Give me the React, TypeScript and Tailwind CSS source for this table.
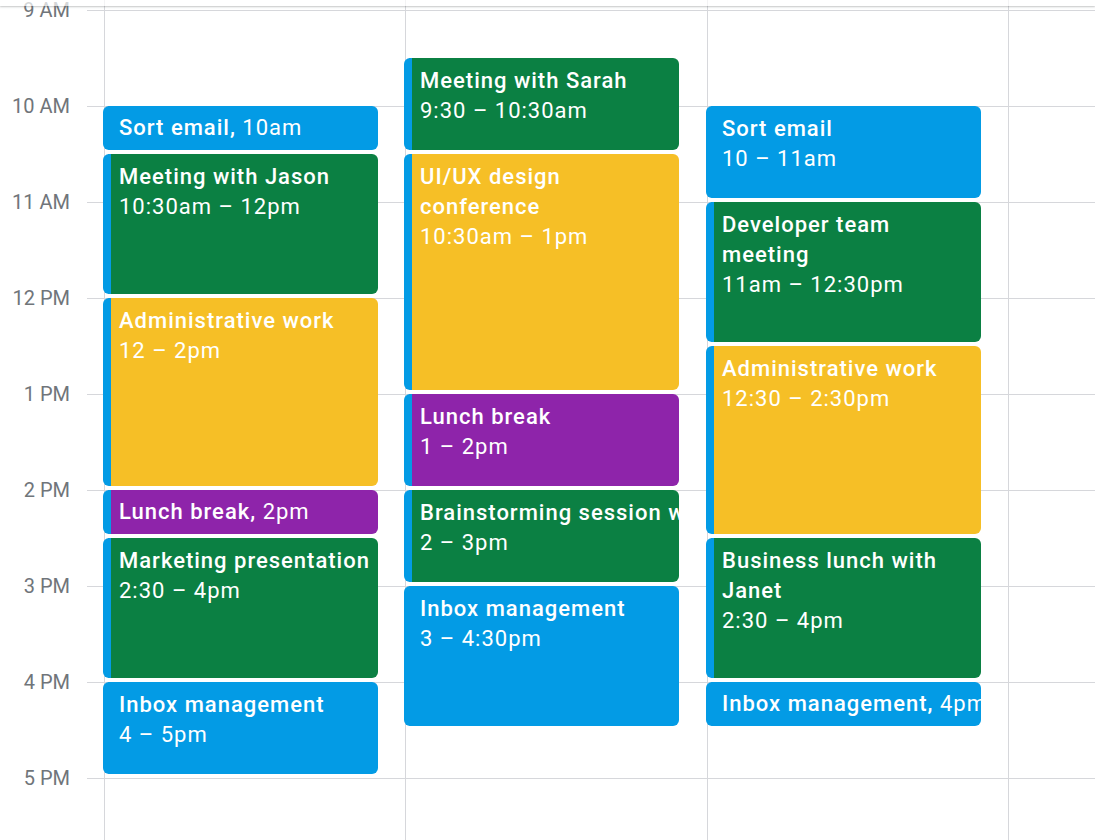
import React from "react";

type Ev = {
  title: string;
  time: string;
  start: number;
  end: number;
  color: string;
  inline?: boolean;
  clip?: boolean;
};

const HOUR = 96;
const FIRST = 9;
const hours = ["9 AM", "10 AM", "11 AM", "12 PM", "1 PM", "2 PM", "3 PM", "4 PM", "5 PM"];

const colors: Record<string, string> = {
  blue: "bg-[#039be5]",
  green: "bg-[#0b8043]",
  yellow: "bg-[#f6bf26]",
  purple: "bg-[#8e24aa]",
};

const columns: Ev[][] = [
  [
    { title: "Sort email", time: "10am", start: 10, end: 10.5, color: "blue", inline: true },
    { title: "Meeting with Jason", time: "10:30am – 12pm", start: 10.5, end: 12, color: "green" },
    { title: "Administrative work", time: "12 – 2pm", start: 12, end: 14, color: "yellow" },
    { title: "Lunch break", time: "2pm", start: 14, end: 14.5, color: "purple", inline: true },
    { title: "Marketing presentation", time: "2:30 – 4pm", start: 14.5, end: 16, color: "green", clip: true },
    { title: "Inbox management", time: "4 – 5pm", start: 16, end: 17, color: "blue" },
  ],
  [
    { title: "Meeting with Sarah", time: "9:30 – 10:30am", start: 9.5, end: 10.5, color: "green" },
    { title: "UI/UX design conference", time: "10:30am – 1pm", start: 10.5, end: 13, color: "yellow" },
    { title: "Lunch break", time: "1 – 2pm", start: 13, end: 14, color: "purple" },
    { title: "Brainstorming session with team", time: "2 – 3pm", start: 14, end: 15, color: "green", clip: true },
    { title: "Inbox management", time: "3 – 4:30pm", start: 15, end: 16.5, color: "blue" },
  ],
  [
    { title: "Sort email", time: "10 – 11am", start: 10, end: 11, color: "blue" },
    { title: "Developer team meeting", time: "11am – 12:30pm", start: 11, end: 12.5, color: "green" },
    { title: "Administrative work", time: "12:30 – 2:30pm", start: 12.5, end: 14.5, color: "yellow" },
    { title: "Business lunch with Janet", time: "2:30 – 4pm", start: 14.5, end: 16, color: "green" },
    { title: "Inbox management", time: "4pm", start: 16, end: 16.5, color: "blue", inline: true },
  ],
  [],
];

function EventCard({ ev }: { ev: Ev }) {
  const top = (ev.start - FIRST) * HOUR;
  const height = (ev.end - ev.start) * HOUR - 4;
  return (
    <div
      className={`absolute left-[-2px] w-[275px] overflow-hidden rounded-[6px] border-l-8 border-[#039be5] pl-[8px] pt-[8px] text-[22px] leading-[30px] tracking-[1px] text-white ${colors[ev.color]}`}
      style={{ top, height }}
    >
      {ev.inline ? (
        <div className="-mt-px whitespace-nowrap">
          <span className="font-medium">{ev.title},</span> {ev.time}
        </div>
      ) : (
        <>
          <div className={ev.clip ? "whitespace-nowrap font-medium" : "pr-2 font-medium"}>{ev.title}</div>
          <div className="whitespace-nowrap">{ev.time}</div>
        </>
      )}
    </div>
  );
}

export default function App() {
  return (
    <div className="relative h-[840px] w-[1095px] overflow-hidden bg-white font-['Roboto','Liberation_Sans',sans-serif]">
      <div className="flex pt-[10px]">
        {/* time gutter */}
        <div className="w-[87px] shrink-0">
          {hours.map((h) => (
            <div key={h} className="relative h-[96px]">
              <span className="absolute right-[17px] top-0 -translate-y-1/2 whitespace-nowrap text-[20px] leading-[24px] text-[#70757a]">
                {h}
              </span>
            </div>
          ))}
        </div>

        {/* grid */}
        <div className="relative flex-1">
          {hours.map((h) => (
            <div key={h} className="h-[96px] border-t border-[#d6d7db]" />
          ))}
          <div className="absolute bottom-0 left-[17px] top-[-10px] flex">
            {columns.map((col, i) => (
              <div
                key={i}
                className={`relative shrink-0 border-l border-[#d6d7db] ${i === 1 ? "w-[302px]" : "w-[301px]"}`}
              >
                <div className="absolute inset-x-0 top-[10px]">
                  {col.map((ev) => (
                    <EventCard key={ev.title + ev.start} ev={ev} />
                  ))}
                </div>
              </div>
            ))}
          </div>
        </div>
      </div>

      {/* header edge */}
      <div className="absolute inset-x-0 top-0 h-[6px] bg-white/70 shadow-[0_1px_2px_rgba(60,64,67,0.3)]" />
    </div>
  );
}
